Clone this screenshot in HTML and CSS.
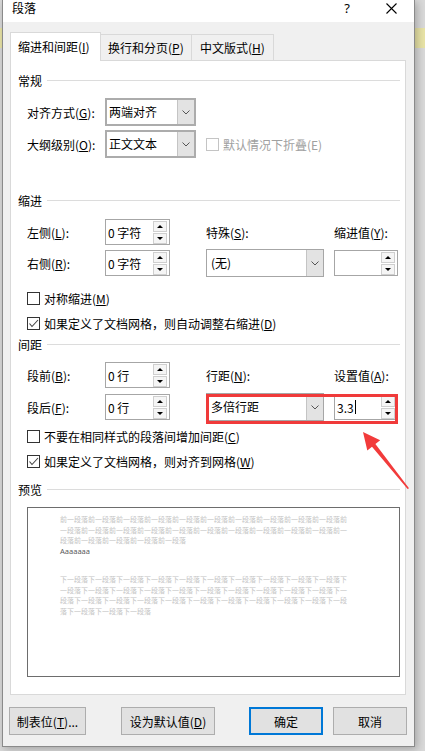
FILE: index.html
```html
<!DOCTYPE html>
<html lang="zh-CN">
<head>
    <meta charset="UTF-8">
    <meta name="viewport" content="width=device-width, initial-scale=1.0">
    <title>段落</title>
    <link rel="stylesheet" href="styles.css">
</head>
<body>
    <div class="dialog">
        <div class="title-bar">
            <span class="title">段落</span>
            <span class="help">?</span>
            <svg class="close" width="11" height="11" viewBox="0 0 11 11">
                <path d="M0.5 0.5 L10.5 10.5 M10.5 0.5 L0.5 10.5" stroke="#000" stroke-width="1.1" fill="none"/>
            </svg>
        </div>

        <div class="tabs">
            <div class="tab active">缩进和间距(<u>I</u>)</div>
            <div class="tab tab-2">换行和分页(<u>P</u>)</div>
            <div class="tab tab-3">中文版式(<u>H</u>)</div>
        </div>

        <div class="panel">
            <div class="section-head"><span>常规</span><i></i></div>
            <div class="general-grid">
                <label>对齐方式(<u>G</u>):</label>
                <div class="select thick"><span>两端对齐</span><b><svg width="8" height="5" viewBox="0 0 8 5"><polyline points="0.5,0.5 4,4 7.5,0.5" fill="none" stroke="#555"/></svg></b></div>
                <span></span>
                <label>大纲级别(<u>O</u>):</label>
                <div class="select thick"><span>正文文本</span><b><svg width="8" height="5" viewBox="0 0 8 5"><polyline points="0.5,0.5 4,4 7.5,0.5" fill="none" stroke="#555"/></svg></b></div>
                <div class="check disabled"><span class="box"></span>默认情况下折叠(E)</div>
            </div>

            <div class="section-head indent-head"><span>缩进</span><i></i></div>
            <div class="field-grid">
                <label>左侧(<u>L</u>):</label>
                <div class="spin"><span>0 字符</span><div class="arrows"><em class="up"></em><em class="down"></em></div></div>
                <label>特殊(<u>S</u>):</label>
                <label>缩进值(<u>Y</u>):</label>

                <label>右侧(<u>R</u>):</label>
                <div class="spin"><span>0 字符</span><div class="arrows"><em class="up"></em><em class="down"></em></div></div>
                <div class="select wide"><span>(无)</span><b><svg width="8" height="5" viewBox="0 0 8 5"><polyline points="0.5,0.5 4,4 7.5,0.5" fill="none" stroke="#555"/></svg></b></div>
                <div class="spin small"><span></span><div class="arrows"><em class="up"></em><em class="down"></em></div></div>
            </div>
            <div class="check first"><span class="box"></span>对称缩进(<u>M</u>)</div>
            <div class="check"><span class="box checked"><svg width="11" height="11" viewBox="0 0 11 11"><polyline points="1.5,5.5 4,8.5 10,2" fill="none" stroke="#444" stroke-width="1.1"/></svg></span>如果定义了文档网格，则自动调整右缩进(<u>D</u>)</div>

            <div class="section-head spacing-head"><span>间距</span><i></i></div>
            <div class="field-grid spacing-grid">
                <label>段前(<u>B</u>):</label>
                <div class="spin"><span>0 行</span><div class="arrows"><em class="up"></em><em class="down"></em></div></div>
                <label>行距(<u>N</u>):</label>
                <label>设置值(<u>A</u>):</label>

                <label>段后(<u>F</u>):</label>
                <div class="spin"><span>0 行</span><div class="arrows"><em class="up"></em><em class="down"></em></div></div>
                <div class="select wide"><span>多倍行距</span><b><svg width="8" height="5" viewBox="0 0 8 5"><polyline points="0.5,0.5 4,4 7.5,0.5" fill="none" stroke="#555"/></svg></b></div>
                <div class="spin small"><span>3.3<s class="caret"></s></span><div class="arrows"><em class="up"></em><em class="down"></em></div></div>
            </div>
            <div class="check"><span class="box"></span>不要在相同样式的段落间增加间距(<u>C</u>)</div>
            <div class="check"><span class="box checked"><svg width="11" height="11" viewBox="0 0 11 11"><polyline points="1.5,5.5 4,8.5 10,2" fill="none" stroke="#444" stroke-width="1.1"/></svg></span>如果定义了文档网格，则对齐到网格(<u>W</u>)</div>

            <div class="section-head preview-head"><span>预览</span><i></i></div>
            <div class="preview">
                <div class="para">
                    <div>前一段落前一段落前一段落前一段落前一段落前一段落前一段落前一段落前一段落前一段落前</div>
                    <div>一段落前一段落前一段落前一段落前一段落前一段落前一段落前一段落前一段落前一段落前一</div>
                    <div>段落前一段落前一段落前一段落前一段落</div>
                </div>
                <div class="sample">Aaaaaaa</div>
                <div class="para next">
                    <div>下一段落下一段落下一段落下一段落下一段落下一段落下一段落下一段落下一段落下一段落下</div>
                    <div>一段落下一段落下一段落下一段落下一段落下一段落下一段落下一段落下一段落下一段落下一</div>
                    <div>段落下一段落下一段落下一段落下一段落下一段落下一段落下一段落下一段落下一段落下一段</div>
                    <div>落下一段落下一段落下一段落</div>
                </div>
            </div>
        </div>

        <div class="buttons">
            <button class="btn btn-tabs">制表位(<u>T</u>)...</button>
            <button class="btn btn-default">设为默认值(<u>D</u>)</button>
            <button class="btn btn-ok">确定</button>
            <button class="btn btn-cancel">取消</button>
        </div>
    </div>

    <div class="mark-box"></div>
    <svg class="mark-arrow" width="56" height="66" viewBox="358 428 56 66">
        <polygon points="363,432 380.2,440.3 375.4,444.1 409,488.2 407.6,489 372,446.7 367.3,450.5" fill="#f23b3b"/>
    </svg>
</body>
</html>
```

FILE: styles.css
```css
* {
    box-sizing: border-box;
}
body {
    margin: 0;
    width: 425px;
    height: 751px;
    overflow: hidden;
    position: relative;
    background: linear-gradient(to bottom, #d9d9d9 28px, #e8e3a6 28px, #e8e3a6 48px, #d9d9d9 48px);
    font-family: "Noto Sans CJK SC", "Noto Sans", sans-serif;
    font-size: 12px;
    color: #000;
}
u {
    text-underline-offset: 1px;
}

.dialog {
    margin-left: 2px;
    width: 413px;
    height: 747px;
    background-color: #f0f0f0;
    border: 1px solid #8a8a8a;
    border-top: none;
    box-shadow: 2px 2px 8px rgba(0, 0, 0, 0.25);
    display: flex;
    flex-direction: column;
}

.title-bar {
    height: 22px;
    background-color: #fff;
    display: flex;
    align-items: flex-start;
    line-height: 16px;
    padding-left: 9px;
}
.title-bar .help {
    margin-left: auto;
    margin-right: 36px;
    font-family: "Noto Sans", sans-serif;
    font-size: 13px;
}
.title-bar .close {
    margin-top: 3px;
    margin-right: 17px;
}

.tabs {
    height: 38px;
    padding: 10px 0 0 7px;
    display: flex;
    align-items: flex-end;
}
.tab {
    height: 26px;
    padding-left: 7px;
    line-height: 25px;
    border: 1px solid #d9d9d9;
    border-bottom: none;
    background-color: #f0f0f0;
}
.tab.active {
    width: 91px;
    height: 29px;
    margin-bottom: -1px;
    line-height: 28px;
    background-color: #fff;
    position: relative;
    z-index: 1;
}
.tab-2 {
    width: 92px;
    margin-left: -1px;
}
.tab-3 {
    width: 83px;
    margin-left: -1px;
    padding-left: 8px;
}

.panel {
    margin: 0 8px 0 7px;
    height: 635px;
    background-color: #fff;
    border: 1px solid #d9d9d9;
    padding: 12px 5px 0 7px;
}

.section-head {
    height: 16px;
    display: flex;
    align-items: center;
    line-height: 16px;
}
.section-head i {
    flex: 1;
    height: 1px;
    margin: 0 0 1px 5px;
    background-color: #dcdcdc;
}
.indent-head {
    margin-top: 35px;
}
.spacing-head {
    margin-top: 4px;
}
.preview-head {
    margin-top: 11px;
}

.general-grid {
    margin-top: 9px;
    padding-left: 9px;
    display: grid;
    grid-template-columns: 78px 101px auto;
    grid-auto-rows: 28px;
    row-gap: 4px;
    align-items: center;
}
.field-grid {
    margin-top: 9px;
    padding-left: 9px;
    display: grid;
    grid-template-columns: 78px 101px 128px 64px;
    grid-auto-rows: 28px;
    row-gap: 3px;
    align-items: center;
}
.spacing-grid {
    margin-top: 8px;
    row-gap: 4px;
}

.select {
    height: 28px;
    width: 91px;
    border: 1px solid #a6a6a6;
    background-color: #fff;
    display: flex;
}
.select.thick {
    border: 2px solid #acacac;
}
.select span {
    flex: 1;
    padding-left: 4px;
    line-height: 25px;
}
.select.thick span {
    padding-left: 2px;
    line-height: 23px;
}
.select b {
    width: 17px;
    background-color: #e3e3e3;
    border-left: 1px solid #c4c4c4;
    display: flex;
    align-items: center;
    justify-content: center;
}
.select.wide {
    width: 118px;
}

.spin {
    width: 65px;
    height: 26px;
    border: 1px solid #a6a6a6;
    background-color: #fff;
    display: flex;
    align-items: center;
    padding-left: 2px;
}
.spin.small {
    width: 64px;
}
.spin span {
    flex: 1;
    display: flex;
    align-items: center;
}
.spin .caret {
    display: inline-block;
    width: 1px;
    height: 14px;
    margin-left: 1px;
    background-color: #000;
}
.spin .arrows {
    width: 14px;
    margin-right: 2px;
    display: flex;
    flex-direction: column;
    gap: 1px;
}
.spin em {
    height: 11px;
    border: 1px solid #cfcfcf;
    background-color: #f5f5f5;
    display: flex;
    align-items: center;
    justify-content: center;
}
.spin em::after {
    content: "";
    border-left: 3px solid transparent;
    border-right: 3px solid transparent;
}
.spin em.up::after {
    border-bottom: 3px solid #000;
}
.spin em.down::after {
    border-top: 3px solid #000;
}

.check {
    height: 20px;
    display: flex;
    align-items: center;
    margin-top: 5px;
    padding-left: 9px;
}
.general-grid .check {
    margin-top: 0;
    padding-left: 0;
}
.check.first {
    margin-top: 11px;
}
.check.disabled {
    color: #a0a0a0;
}
.check .box {
    width: 13px;
    height: 13px;
    border: 1px solid #333;
    background-color: #fff;
    margin-right: 4px;
    display: flex;
    align-items: center;
    justify-content: center;
}
.check.disabled .box {
    border-color: #c4c4c4;
}

.preview {
    margin: 9px 0 0 9px;
    height: 170px;
    border: 1px solid #6d6d6d;
    padding: 6px 0 0 32px;
    font-size: 7px;
    line-height: 10.5px;
    color: #c4c4c4;
    white-space: nowrap;
}
.preview .sample {
    color: #5a5a5a;
    font-family: "Noto Sans", sans-serif;
    font-size: 7.5px;
}
.preview .next {
    margin-top: 18px;
}

.buttons {
    margin-top: 12px;
    height: 28px;
    display: flex;
    padding-left: 6px;
}
.btn {
    height: 28px;
    border: 1px solid #adadad;
    background-color: #e1e1e1;
    font-family: "Noto Sans CJK SC", "Noto Sans", sans-serif;
    font-size: 12px;
    color: #000;
    padding: 0;
}
.btn-tabs {
    width: 77px;
}
.btn-default {
    width: 94px;
    margin-left: 35px;
}
.btn-ok {
    width: 74px;
    margin-left: 34px;
    border: 2px solid #0078d7;
}
.btn-cancel {
    width: 74px;
    margin-left: 10px;
}

.mark-box {
    position: absolute;
    left: 206px;
    top: 394px;
    width: 192px;
    height: 30px;
    border: 3px solid #f03a3a;
}
.mark-arrow {
    position: absolute;
    left: 358px;
    top: 428px;
}
```
